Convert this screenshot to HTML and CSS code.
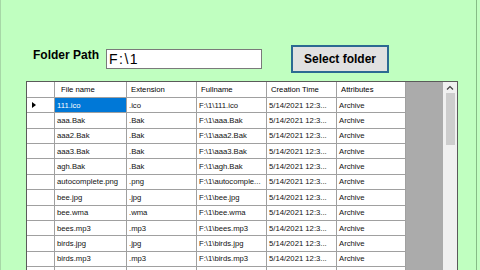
FILE: index.html
```html
<!DOCTYPE html>
<html>
<head>
<meta charset="utf-8">
<link rel="stylesheet" href="styles.css">
</head>
<body>
<div class="form">
  <div class="toolbar">
    <label class="path-label">Folder Path</label>
    <div class="path-input">F:\1</div>
    <button class="select-btn">Select folder</button>
  </div>
  <div class="grid">
    <div class="grid-body">
      <div class="rows">
        <div class="row head">
          <div class="cell rh"></div>
          <div class="cell first">File name</div>
          <div class="cell">Extension</div>
          <div class="cell">Fullname</div>
          <div class="cell">Creation Time</div>
          <div class="cell">Attributes</div>
        </div>
        <div class="row">
          <div class="cell rh"><span class="current"></span></div>
          <div class="cell sel">111.ico</div>
          <div class="cell">.ico</div>
          <div class="cell">F:\1\111.ico</div>
          <div class="cell">5/14/2021 12:3...</div>
          <div class="cell">Archive</div>
        </div>
        <div class="row">
          <div class="cell rh"></div>
          <div class="cell">aaa.Bak</div>
          <div class="cell">.Bak</div>
          <div class="cell">F:\1\aaa.Bak</div>
          <div class="cell">5/14/2021 12:3...</div>
          <div class="cell">Archive</div>
        </div>
        <div class="row">
          <div class="cell rh"></div>
          <div class="cell">aaa2.Bak</div>
          <div class="cell">.Bak</div>
          <div class="cell">F:\1\aaa2.Bak</div>
          <div class="cell">5/14/2021 12:3...</div>
          <div class="cell">Archive</div>
        </div>
        <div class="row">
          <div class="cell rh"></div>
          <div class="cell">aaa3.Bak</div>
          <div class="cell">.Bak</div>
          <div class="cell">F:\1\aaa3.Bak</div>
          <div class="cell">5/14/2021 12:3...</div>
          <div class="cell">Archive</div>
        </div>
        <div class="row">
          <div class="cell rh"></div>
          <div class="cell">agh.Bak</div>
          <div class="cell">.Bak</div>
          <div class="cell">F:\1\agh.Bak</div>
          <div class="cell">5/14/2021 12:3...</div>
          <div class="cell">Archive</div>
        </div>
        <div class="row">
          <div class="cell rh"></div>
          <div class="cell">autocomplete.png</div>
          <div class="cell">.png</div>
          <div class="cell">F:\1\autocomple...</div>
          <div class="cell">5/14/2021 12:3...</div>
          <div class="cell">Archive</div>
        </div>
        <div class="row">
          <div class="cell rh"></div>
          <div class="cell">bee.jpg</div>
          <div class="cell">.jpg</div>
          <div class="cell">F:\1\bee.jpg</div>
          <div class="cell">5/14/2021 12:3...</div>
          <div class="cell">Archive</div>
        </div>
        <div class="row">
          <div class="cell rh"></div>
          <div class="cell">bee.wma</div>
          <div class="cell">.wma</div>
          <div class="cell">F:\1\bee.wma</div>
          <div class="cell">5/14/2021 12:3...</div>
          <div class="cell">Archive</div>
        </div>
        <div class="row">
          <div class="cell rh"></div>
          <div class="cell">bees.mp3</div>
          <div class="cell">.mp3</div>
          <div class="cell">F:\1\bees.mp3</div>
          <div class="cell">5/14/2021 12:3...</div>
          <div class="cell">Archive</div>
        </div>
        <div class="row">
          <div class="cell rh"></div>
          <div class="cell">birds.jpg</div>
          <div class="cell">.jpg</div>
          <div class="cell">F:\1\birds.jpg</div>
          <div class="cell">5/14/2021 12:3...</div>
          <div class="cell">Archive</div>
        </div>
        <div class="row">
          <div class="cell rh"></div>
          <div class="cell">birds.mp3</div>
          <div class="cell">.mp3</div>
          <div class="cell">F:\1\birds.mp3</div>
          <div class="cell">5/14/2021 12:3...</div>
          <div class="cell">Archive</div>
        </div>
        <div class="row">
          <div class="cell rh"></div>
          <div class="cell"></div>
          <div class="cell"></div>
          <div class="cell"></div>
          <div class="cell"></div>
          <div class="cell"></div>
        </div>
      </div>
      <div class="vscroll">
        <div class="arrow">
          <svg width="8" height="5" viewBox="0 0 8 5"><path d="M1 4.5 L4 1.5 L7 4.5" fill="none" stroke="#404040" stroke-width="1.2"/></svg>
        </div>
        <div class="thumb"></div>
      </div>
    </div>
  </div>
</div>
</body>
</html>
```
FILE: styles.css
```css
html {
  margin: 0;
  background: #c0ffc0;
}
body {
  margin: 0;
  width: 477px;
  height: 270px;
  overflow: hidden;
  background: #c0ffc0;
  border-left: 1px solid #a6d8a6;
  border-right: 1px solid #86bc86;
  box-sizing: border-box;
  font-family: "Liberation Sans", Arial, sans-serif;
}
.form {
  display: flex;
  flex-direction: column;
}
.toolbar {
  display: flex;
  align-items: flex-start;
  padding: 45px 0 0 32px;
  height: 36px;
}
.path-label {
  width: 73px;
  margin-top: 3px;
  font-size: 12px;
  line-height: 14px;
  font-weight: bold;
  color: #000;
}
.path-input {
  width: 156px;
  height: 20px;
  margin-top: 4px;
  box-sizing: border-box;
  border: 1px solid #7a7a7a;
  background: #fff;
  padding-left: 2px;
  font-size: 14px;
  line-height: 18px;
  letter-spacing: 1.5px;
  color: #000;
}
.select-btn {
  width: 98px;
  height: 28px;
  margin-left: 29px;
  box-sizing: border-box;
  border: 2px solid #2c6a92;
  background: #e1e1e1;
  font-family: "Liberation Sans", Arial, sans-serif;
  font-size: 12px;
  font-weight: bold;
  color: #000;
  padding: 0;
}
.grid {
  margin-left: 25px;
  width: 432px;
  height: 200px;
  box-sizing: border-box;
  border: 1px solid #5a5a5a;
  border-bottom: none;
  background: #ababab;
}
.grid-body {
  display: flex;
  height: 100%;
}
.rows {
  flex: 1;
  display: flex;
  flex-direction: column;
}
.row {
  display: grid;
  grid-template-columns: 28px 72px 70px 70px 70px 69px;
  height: 15.36px;
  flex: none;
}
.row.head {
  height: 16px;
}
.cell {
  box-sizing: border-box;
  border-right: 1px solid #a0a0a0;
  border-bottom: 1px solid #a0a0a0;
  background: #fff;
  display: flex;
  align-items: center;
  padding-left: 2px;
  font-size: 7.7px;
  color: #111;
  white-space: nowrap;
  overflow: hidden;
}
.head .cell {
  padding-left: 4px;
  color: #000;
}
.head .cell.first {
  padding-left: 6px;
}
.cell.rh {
  padding-left: 5px;
}
.cell.sel {
  background: #0078d7;
  color: #fff;
}
.current {
  width: 0;
  height: 0;
  border-left: 4px solid #000;
  border-top: 3px solid transparent;
  border-bottom: 3px solid transparent;
}
.vscroll {
  width: 14px;
  flex: none;
  background: #f0f0f0;
  display: flex;
  flex-direction: column;
  align-items: center;
}
.arrow {
  height: 11px;
  display: flex;
  align-items: center;
  justify-content: center;
}
.thumb {
  width: 9px;
  height: 52px;
  background: #cdcdcd;
}
```
